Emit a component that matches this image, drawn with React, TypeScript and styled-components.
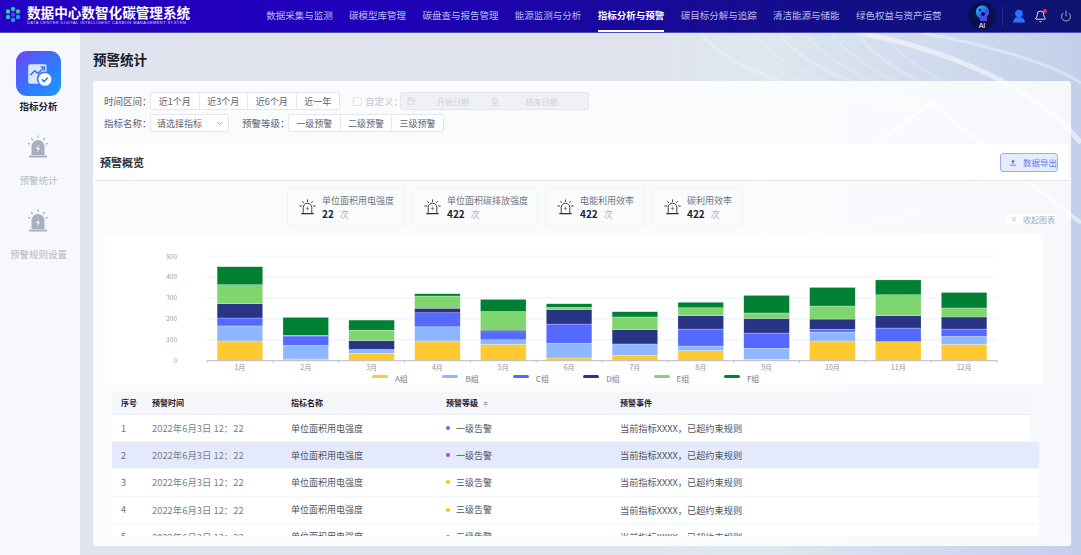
import React from 'react';
import styled, { createGlobalStyle } from 'styled-components';
import { Bell, Calendar, ChevronDown, ChevronsDown, Power } from 'lucide-react';

const GlobalStyle = createGlobalStyle`
  html, body, #root {
    margin: 0;
    height: 100%;
    overflow: hidden;
  }
  body {
    font-family: "Noto Sans CJK SC", "Noto Sans", sans-serif;
    color: #333;
  }
  * { box-sizing: border-box; }
`;

const Shell = styled.div`
  display: flex;
  flex-direction: column;
  height: 100vh;
`;

const Header = styled.header`
  display: flex;
  align-items: stretch;
  flex: 0 0 33px;
  padding: 0 9px 0 5px;
  background: linear-gradient(90deg, #2500c6 0%, #2000b8 35%, #170a96 62%, #0c1470 100%);
  border-bottom: 1px solid #4a4fb8;
`;

const Brand = styled.div`
  display: flex;
  align-items: center;
  gap: 6px;
  flex: 0 0 185px;
  padding-bottom: 3px;
`;

const BrandText = styled.div`
  display: flex;
  flex-direction: column;
  color: #fff;
`;

const BrandTitle = styled.div`
  font-size: 13.6px;
  line-height: 16px;
  font-weight: 700;
  white-space: nowrap;
`;

const BrandSub = styled.div`
  font-family: "Liberation Sans", sans-serif;
  font-size: 4px;
  line-height: 5px;
  letter-spacing: 0.42px;
  white-space: nowrap;
  color: #d8d8ff;
`;

const Nav = styled.nav`
  display: flex;
  gap: 16.4px;
  margin-left: 76px;
`;

const NavLink = styled.a<{ $active?: boolean }>`
  display: flex;
  align-items: center;
  height: 32px;
  font-size: 9.5px;
  white-space: nowrap;
  color: ${(p) => (p.$active ? '#fff' : '#b9bdf0')};
  font-weight: ${(p) => (p.$active ? 700 : 400)};
  border-bottom: 2px solid ${(p) => (p.$active ? '#fff' : 'transparent')};
`;

const HeaderTools = styled.div`
  display: flex;
  align-items: center;
  margin-left: auto;
`;

const Divider = styled.span`
  width: 1px;
  height: 20px;
  margin: 0 7px 0 6px;
  background: #1c2a86;
`;

const BellWrap = styled.span`
  position: relative;
  display: flex;
  margin: 0 13px 0 6px;
  color: #fff;
`;

const BellDot = styled.span`
  position: absolute;
  top: -1px;
  right: 0;
  width: 4px;
  height: 4px;
  border-radius: 50%;
  background: #f0344a;
`;

const Body = styled.div`
  display: flex;
  flex: 1;
  min-height: 0;
`;

const Sidebar = styled.aside`
  display: flex;
  flex-direction: column;
  align-items: center;
  gap: 23px;
  flex: 0 0 80px;
  padding: 18px 3px 0 0;
  background: #f7f8fb;
`;

const SideItem = styled.div<{ $active?: boolean }>`
  display: flex;
  flex-direction: column;
  align-items: center;
  gap: ${(p) => (p.$active ? '4px' : '15px')};
  font-size: 9.5px;
  line-height: 12px;
  white-space: nowrap;
  color: ${(p) => (p.$active ? '#1c2233' : '#b6b9c4')};
  font-weight: ${(p) => (p.$active ? 700 : 400)};
`;

const ActiveTile = styled.div`
  display: flex;
  align-items: center;
  justify-content: center;
  width: 45px;
  height: 45px;
  border-radius: 11px;
  background: linear-gradient(135deg, #6b45f6 0%, #2f7bff 60%, #1a9bff 100%);
`;

const Main = styled.main`
  position: relative;
  display: flex;
  flex-direction: column;
  flex: 1;
  min-width: 0;
  padding: 0 10px 9px 13px;
  background: linear-gradient(90deg, #e0e4ee 0%, #e0e4ee 58%, #dde8ef 68%, #d3ddee 82%, #c4d0ea 100%);
  overflow: hidden;
`;

const Swirl = styled.svg`
  position: absolute;
  top: 0;
  right: 0;
  pointer-events: none;
`;

const PageTitle = styled.h1`
  position: relative;
  flex: 0 0 48px;
  margin: 0;
  padding-top: 5px;
  font-size: 13.5px;
  line-height: 42px;
  font-weight: 700;
  color: #161b28;
`;

const Panel = styled.section`
  position: relative;
  display: flex;
  flex-direction: column;
  flex: 1;
  min-height: 0;
  padding-bottom: 10px;
  border-radius: 3px;
  background: rgba(255, 255, 255, 0.84);
  overflow: hidden;
`;

const Filters = styled.div`
  display: flex;
  flex-direction: column;
  gap: 4px;
  padding: 11px 0 12px 11px;
`;

const FilterRow = styled.div`
  display: flex;
  align-items: center;
  height: 18px;
  font-size: 9px;
  color: #5d6270;
`;

const FilterLabel = styled.span<{ $gap?: boolean }>`
  width: 46px;
  font-size: 9.5px;
  white-space: nowrap;
  margin-left: ${(p) => (p.$gap ? '13px' : '0')};
`;

const Segments = styled.div`
  display: flex;
  height: 18px;
`;

const Segment = styled.button<{ $pad: number }>`
  padding: 0 ${(p) => p.$pad}px;
  margin-left: -1px;
  font: inherit;
  color: #5d6270;
  white-space: nowrap;
  background: #fff;
  border: 1px solid #e3e7f2;
  &:first-child {
    margin-left: 0;
    border-radius: 2px 0 0 2px;
  }
  &:last-child { border-radius: 0 2px 2px 0; }
`;

const CustomCheck = styled.span`
  width: 9px;
  height: 9px;
  margin: 0 3px 0 13px;
  background: #fff;
  border: 1px solid #dfe2ea;
  border-radius: 2px;
`;

const CustomLabel = styled.span`
  width: 35px;
  font-size: 9.5px;
  color: #c4c7d0;
  white-space: nowrap;
`;

const DateRange = styled.div`
  display: flex;
  align-items: center;
  width: 189px;
  height: 18px;
  padding-left: 6px;
  font-size: 8px;
  color: #cdd0d9;
  background: #eff1f6;
  border: 1px solid #e3e6ef;
  border-radius: 2px;
`;

const DateText = styled.span<{ $w: number }>`
  width: ${(p) => p.$w}px;
  text-align: center;
  white-space: nowrap;
`;

const SelectBox = styled.div`
  display: flex;
  align-items: center;
  justify-content: space-between;
  width: 79px;
  height: 18px;
  padding: 0 4px 0 6px;
  color: #5d6270;
  background: #fff;
  border: 1px solid #e3e7f2;
  border-radius: 2px;
`;

const SectionHead = styled.div`
  display: flex;
  align-items: center;
  justify-content: space-between;
  flex: 0 0 37px;
  margin: 0 3px 0 2px;
  padding: 0 10px 0 5px;
  background: #fff;
  border-bottom: 1px solid #e4e6ea;
`;

const SectionTitle = styled.h2`
  margin: 0;
  font-size: 11px;
  font-weight: 700;
  color: #2a2e38;
`;

const ExportButton = styled.button`
  display: flex;
  align-items: center;
  gap: 6px;
  width: 58px;
  height: 19px;
  padding: 0 0 0 8px;
  font: inherit;
  font-size: 8.5px;
  white-space: nowrap;
  color: #5c7ff0;
  background: #e5ecff;
  border: 1px solid #93b1fb;
  border-radius: 3px;
`;

const KpiBar = styled.div`
  display: flex;
  align-items: flex-end;
  flex: 0 0 38px;
  margin-top: 7px;
  padding: 0 15px 0 194px;
`;

const KpiCard = styled.div<{ $w: number }>`
  display: flex;
  align-items: center;
  gap: 6px;
  width: ${(p) => p.$w}px;
  height: 38px;
  margin-right: 7px;
  padding-left: 11px;
  background: #fafbfc;
  border: 1px solid #f1f3f6;
  border-radius: 2px;
`;

const KpiLabel = styled.div`
  font-size: 9px;
  line-height: 13px;
  color: #70747f;
  white-space: nowrap;
`;

const KpiValue = styled.div`
  display: flex;
  align-items: baseline;
  gap: 6px;
  font-size: 10px;
  line-height: 13px;
  font-weight: 700;
  color: #1b2240;
`;

const KpiUnit = styled.span`
  font-size: 9px;
  font-weight: 400;
  color: #aeb3c2;
`;

const CollapseToggle = styled.div`
  display: flex;
  align-items: center;
  gap: 5px;
  margin: 0 0 2px auto;
  padding: 0 1px 0 5px;
  height: 10px;
  font-size: 8px;
  color: #a3a7b0;
  white-space: nowrap;
  background: #fff;
`;

const ChartCard = styled.div`
  flex: 0 0 150px;
  width: 938px;
  margin: 8px 0 0 12px;
  background: #fff;
`;

const ChartSvg = styled.svg`
  display: block;
  font-family: "Noto Sans CJK SC", sans-serif;
`;

const Legend = styled.div`
  display: flex;
  height: 12px;
  padding-left: 267px;
`;

const LegendItem = styled.div`
  display: flex;
  align-items: center;
  gap: 7px;
  width: 70.4px;
  font-size: 8px;
  color: #777b84;
  white-space: nowrap;
`;

const LegendSwatch = styled.span<{ $color: string }>`
  width: 16px;
  height: 3px;
  margin-top: -3px;
  border-radius: 2px;
  background: ${(p) => p.$color};
`;

const Table = styled.div`
  display: flex;
  flex-direction: column;
  flex: 1;
  min-height: 0;
  width: 927px;
  margin: 8px 0 0 19px;
  overflow: hidden;
`;

const tableColumns = '31px 139px 155px 174px 1fr';

const TableHead = styled.div`
  display: grid;
  grid-template-columns: ${tableColumns};
  align-items: center;
  flex: 0 0 23px;
  width: 918px;
  padding: 0 0 1px 9px;
  font-size: 8px;
  font-weight: 700;
  color: #1c2030;
  background: #f5f6fa;
  border-bottom: 1px solid #eceef5;
`;

const SortMark = styled.span`
  margin-left: 5px;
  font-size: 6px;
  font-weight: 400;
  color: #9aa0ae;
`;

const TableRow = styled.div<{ $selected?: boolean; $short?: boolean }>`
  display: grid;
  grid-template-columns: ${tableColumns};
  align-items: center;
  flex: 0 0 27.2px;
  width: ${(p) => (p.$short ? '918px' : '927px')};
  padding-left: 9px;
  font-size: 9px;
  color: #50545e;
  background: ${(p) => (p.$selected ? '#e4eafc' : '#fff')};
  border-bottom: 1px solid #f5f6f9;
`;

const TimeCell = styled.span`
  font-size: 9.4px;
  color: #7b7f89;
  white-space: nowrap;
`;

const IndexCell = styled.span`
  color: #6b6f79;
`;

const LevelCell = styled.span`
  display: flex;
  align-items: center;
  gap: 6px;
`;

const LevelDot = styled.i<{ $color: string }>`
  width: 4px;
  height: 4px;
  border-radius: 50%;
  background: ${(p) => p.$color};
`;

const EventCell = styled.span`
  font-size: 9.2px;
  white-space: nowrap;
`;

const navItems = [
  '数据采集与监测',
  '碳模型库管理',
  '碳盘查与报告管理',
  '能源监测与分析',
  '指标分析与预警',
  '碳目标分解与追踪',
  '清洁能源与储能',
  '绿色权益与资产运营',
];

const timeRanges = ['近1个月', '近3个月', '近6个月', '近一年'];
const levels = ['一级预警', '二级预警', '三级预警'];

const kpis = [
  { label: '单位面积用电强度', value: 22, width: 118 },
  { label: '单位面积碳排放强度', value: 422, width: 126 },
  { label: '电能利用效率', value: 422, width: 100 },
  { label: '碳利用效率', value: 422, width: 91 },
];

const groups = [
  { name: 'A组', color: '#ffc933' },
  { name: 'B组', color: '#8db8ff' },
  { name: 'C组', color: '#5469ff' },
  { name: 'D组', color: '#293584' },
  { name: 'E组', color: '#80d66e' },
  { name: 'F组', color: '#008033' },
];

const months = [
  [94, 72, 38, 68, 91, 86],
  [8, 65, 45, 0, 3, 86],
  [35, 19, 0, 42, 50, 48],
  [94, 68, 67, 22, 58, 11],
  [78, 22, 38, 8, 89, 58],
  [13, 70, 92, 70, 10, 17],
  [25, 55, 0, 68, 61, 25],
  [48, 22, 81, 64, 38, 26],
  [6, 53, 73, 70, 26, 84],
  [94, 43, 13, 49, 62, 89],
  [91, 0, 65, 59, 100, 71],
  [78, 38, 35, 58, 43, 74],
];

const rows = [
  { level: '一级告警', color: '#9b4fe0' },
  { level: '一级告警', color: '#9b4fe0', selected: true },
  { level: '三级告警', color: '#ffc107' },
  { level: '三级告警', color: '#ffc107' },
  { level: '二级告警', color: '#f4646e' },
];

function Logo() {
  const dots = [
    [8, 2, '#27c7b8'], [13, 4.5, '#2bd08f'], [13, 10, '#1f9be8'], [8, 13, '#1f9be8'],
    [3, 10, '#27c7b8'], [3, 4.5, '#39d27a'], [8, 7.5, '#5b3df0'],
  ] as const;
  return (
    <svg width="16" height="16" viewBox="0 0 16 16">
      {dots.map(([x, y, c], i) => (
        <circle key={i} cx={x} cy={y} r="2.2" fill={c} />
      ))}
    </svg>
  );
}

function AiBadge() {
  return (
    <svg width="28" height="28" viewBox="0 0 28 28">
      <defs>
        <linearGradient id="aiHead" x1="0" y1="0" x2="1" y2="1">
          <stop offset="0" stopColor="#21d4f0" />
          <stop offset="0.55" stopColor="#2a5cf0" />
          <stop offset="1" stopColor="#8a2ce0" />
        </linearGradient>
      </defs>
      <circle cx="14" cy="14" r="14" fill="#0a0f4e" />
      <path d="M8 10c0-4 3-6.500 6.500-6.500S21 6 21 10c0 2-.5 3-2 4.500V19h-7l-.5-3C9 15 8 13 8 10z" fill="url(#aiHead)" />
      <circle cx="12" cy="8" r="1.300" fill="#0a0f4e" />
      <circle cx="15" cy="12" r="2" fill="#0a0f4e" />
      <text x="14" y="26" fontSize="7" fill="#fff" textAnchor="middle" fontFamily="Liberation Sans, sans-serif">AI</text>
    </svg>
  );
}

function UserBadge() {
  return (
    <svg width="18" height="18" viewBox="0 0 18 18">
      <circle cx="9" cy="9" r="9" fill="#0a1878" />
      <circle cx="9" cy="6.500" r="3.800" fill="#2f6fff" />
      <path d="M3 15.500c.5-3.800 3-5.500 6-5.500s5.500 1.700 6 5.500z" fill="#2f6fff" />
    </svg>
  );
}

function ChartTileIcon() {
  return (
    <svg width="28" height="28" viewBox="0 0 26 26">
      <path d="M3 5.500A1.500 1.500 0 0 1 4.500 4h14A1.500 1.500 0 0 1 20 5.500V11a7 7 0 0 0-7.500 11H4.500A1.500 1.500 0 0 1 3 20.500z" fill="#fff" fillOpacity="0.82" />
      <path d="M5 14l4-4 3 2.500 5-5" fill="none" stroke="#3d74fb" strokeWidth="1.500" />
      <path d="M14.500 6.500H18V10" fill="none" stroke="#3d74fb" strokeWidth="1.500" />
      <circle cx="18.500" cy="18" r="6" fill="#fff" />
      <path d="M15.800 18l2 2 3.400-3.700" fill="none" stroke="#2f7bff" strokeWidth="1.500" />
    </svg>
  );
}

function AlarmFilled() {
  return (
    <svg width="22" height="24" viewBox="0 0 22 24">
      <g stroke="#a8afc3" strokeWidth="1.300" strokeLinecap="round">
        <path d="M11 1v1.500M4.500 3.500l1 1.200M17.500 3.500l-1 1.200M1.500 8.500l1.500.6M20.500 8.500l-1.500.6" />
      </g>
      <path d="M4.500 20v-8.500a6.500 6.500 0 0 1 13 0V20z" fill="#a8afc3" />
      <rect x="2" y="20.500" width="18" height="2" rx="0.600" fill="#a8afc3" />
      <path d="M11.800 10l-2.800 4h2l-.8 3.200 2.800-4h-2z" fill="#fff" />
    </svg>
  );
}

function AlarmOutline() {
  return (
    <svg width="17" height="17" viewBox="0 0 17 17" fill="none" stroke="#2a2f3c" strokeWidth="0.900">
      <path d="M8.500.8v1.700M3.600 2.600l1 1.200M13.400 2.600l-1 1.200M.8 7h1.800M14.400 7h1.800" strokeLinecap="round" />
      <path d="M4.200 14V8.500a4.300 4.300 0 0 1 8.600 0V14" />
      <path d="M2.300 14.600h12.400" strokeWidth="1.200" />
      <path d="M9 7l-1.900 2.800h1.700L8 12l1.900-2.800H8.300z" fill="#2a2f3c" stroke="none" />
    </svg>
  );
}

function ExportIcon() {
  return (
    <svg width="9" height="9" viewBox="0 0 9 9" fill="#5c7ff0">
      <path d="M4.500 1L7 3.800H5.300V6H3.700V3.800H2z" />
      <rect x="1" y="7" width="7" height="1" />
    </svg>
  );
}

function Swirls() {
  const arcs = [0, 1, 2, 3, 4, 5, 6, 7];
  return (
    <Swirl width="420" height="522" viewBox="0 0 420 522" fill="none">
      {arcs.map((i) => (
        <path
          key={i}
          d={`M${40 + i * 26} 0C${70 + i * 26} 40 ${150 + i * 22} 62 ${250 + i * 16} 78`}
          stroke="#fff"
          strokeOpacity={0.22}
          strokeWidth={i % 3 === 0 ? 3 : 1.5}
        />
      ))}
      <path d="M200 0C300 20 380 60 420 110" stroke="#fff" strokeOpacity="0.5" strokeWidth="5" />
      <path d="M260 0C320 10 390 30 420 50" stroke="#fff" strokeOpacity="0.35" strokeWidth="3" />
      <path d="M190 130L270 70L420 190" stroke="#fff" strokeOpacity="0.5" strokeWidth="4" />
      <path d="M150 200C260 190 340 150 360 100" stroke="#fff" strokeOpacity="0.4" strokeWidth="2" />
    </Swirl>
  );
}

const chart = { left: 102, right: 892, base: 126.7, scale: 0.2093, barWidth: 45.6 };

function StackedChart() {
  const step = (chart.right - chart.left) / months.length;
  return (
    <ChartSvg width="938" height="138" viewBox="0 0 938 138">
      {[0, 100, 200, 300, 400, 500].map((tick) => {
        const y = chart.base - tick * chart.scale;
        return (
          <g key={tick}>
            {tick > 0 && <line x1={chart.left} x2={chart.right} y1={y} y2={y} stroke="#eef1f8" />}
            <text x="72" y={y + 2.5} fontSize="6.500" fill="#9a9eaa" textAnchor="end">{tick}</text>
          </g>
        );
      })}
      {months.map((values, m) => {
        const x = chart.left + step * m + (step - chart.barWidth) / 2;
        let acc = 0;
        return (
          <g key={m}>
            {values.map((v, g) => {
              const y = chart.base - (acc + v) * chart.scale;
              acc += v;
              if (v === 0) return null;
              return (
                <rect
                  key={g}
                  x={x}
                  y={y}
                  width={chart.barWidth}
                  height={v * chart.scale}
                  fill={groups[g].color}
                  stroke="#fff"
                  strokeOpacity="0.5"
                  strokeWidth="0.500"
                />
              );
            })}
            <text x={x + chart.barWidth / 2} y="136" fontSize="7" fill="#8d919c" textAnchor="middle">
              {m + 1}月
            </text>
            <line x1={chart.left + step * m} x2={chart.left + step * m} y1={chart.base} y2={chart.base + 2} stroke="#b8bcc8" />
          </g>
        );
      })}
      <line x1={chart.left} x2={chart.right} y1={chart.base} y2={chart.base} stroke="#b8bcc8" />
      <line x1={chart.right} x2={chart.right} y1={chart.base} y2={chart.base + 2} stroke="#b8bcc8" />
    </ChartSvg>
  );
}

export default function App() {
  return (
    <>
      <GlobalStyle />
      <Shell>
        <Header>
          <Brand>
            <Logo />
            <BrandText>
              <BrandTitle>数据中心数智化碳管理系统</BrandTitle>
              <BrandSub>DATA CENTER DIGITAL INTELLIGENT CARBON MANAGEMENT SYSTEM</BrandSub>
            </BrandText>
          </Brand>
          <Nav>
            {navItems.map((item) => (
              <NavLink key={item} $active={item === '指标分析与预警'}>{item}</NavLink>
            ))}
          </Nav>
          <HeaderTools>
            <AiBadge />
            <Divider />
            <UserBadge />
            <BellWrap>
              <Bell size={13} strokeWidth={1.6} />
              <BellDot />
            </BellWrap>
            <Power size={12} color="#cfd6ee" strokeWidth={1.5} />
          </HeaderTools>
        </Header>
        <Body>
          <Sidebar>
            <SideItem $active>
              <ActiveTile><ChartTileIcon /></ActiveTile>
              指标分析
            </SideItem>
            <SideItem>
              <AlarmFilled />
              预警统计
            </SideItem>
            <SideItem>
              <AlarmFilled />
              预警规则设置
            </SideItem>
          </Sidebar>
          <Main>
            <Swirls />
            <PageTitle>预警统计</PageTitle>
            <Panel>
              <Filters>
                <FilterRow>
                  <FilterLabel>时间区间：</FilterLabel>
                  <Segments>
                    {timeRanges.map((range) => (
                      <Segment key={range} $pad={7.75}>{range}</Segment>
                    ))}
                  </Segments>
                  <CustomCheck />
                  <CustomLabel>自定义：</CustomLabel>
                  <DateRange>
                    <Calendar size={8} color="#cdd0d9" />
                    <DateText $w={76}>开始日期</DateText>
                    <DateText $w={8}>至</DateText>
                    <DateText $w={85}>结束日期</DateText>
                  </DateRange>
                </FilterRow>
                <FilterRow>
                  <FilterLabel>指标名称：</FilterLabel>
                  <SelectBox>
                    请选择指标
                    <ChevronDown size={9} color="#8a8e99" />
                  </SelectBox>
                  <FilterLabel $gap>预警等级：</FilterLabel>
                  <Segments>
                    {levels.map((level) => (
                      <Segment key={level} $pad={7.3}>{level}</Segment>
                    ))}
                  </Segments>
                </FilterRow>
              </Filters>
              <SectionHead>
                <SectionTitle>预警概览</SectionTitle>
                <ExportButton>
                  <ExportIcon />
                  数据导出
                </ExportButton>
              </SectionHead>
              <KpiBar>
                {kpis.map((kpi) => (
                  <KpiCard key={kpi.label} $w={kpi.width}>
                    <AlarmOutline />
                    <div>
                      <KpiLabel>{kpi.label}</KpiLabel>
                      <KpiValue>
                        {kpi.value}
                        <KpiUnit>次</KpiUnit>
                      </KpiValue>
                    </div>
                  </KpiCard>
                ))}
                <CollapseToggle>
                  <ChevronsDown size={8} color="#a3a7b0" />
                  收起图表
                </CollapseToggle>
              </KpiBar>
              <ChartCard>
                <StackedChart />
                <Legend>
                  {groups.map((group) => (
                    <LegendItem key={group.name}>
                      <LegendSwatch $color={group.color} />
                      {group.name}
                    </LegendItem>
                  ))}
                </Legend>
              </ChartCard>
              <Table>
                <TableHead>
                  <span>序号</span>
                  <span>预警时间</span>
                  <span>指标名称</span>
                  <span>预警等级<SortMark>≑</SortMark></span>
                  <span>预警事件</span>
                </TableHead>
                {rows.map((row, i) => (
                  <TableRow key={i} $selected={row.selected} $short={i === 0}>
                    <IndexCell>{i + 1}</IndexCell>
                    <TimeCell>2022年6月3日 12：22</TimeCell>
                    <span>单位面积用电强度</span>
                    <LevelCell>
                      <LevelDot $color={row.color} />
                      {row.level}
                    </LevelCell>
                    <EventCell>当前指标XXXX，已超约束规则</EventCell>
                  </TableRow>
                ))}
              </Table>
            </Panel>
          </Main>
        </Body>
      </Shell>
    </>
  );
}
